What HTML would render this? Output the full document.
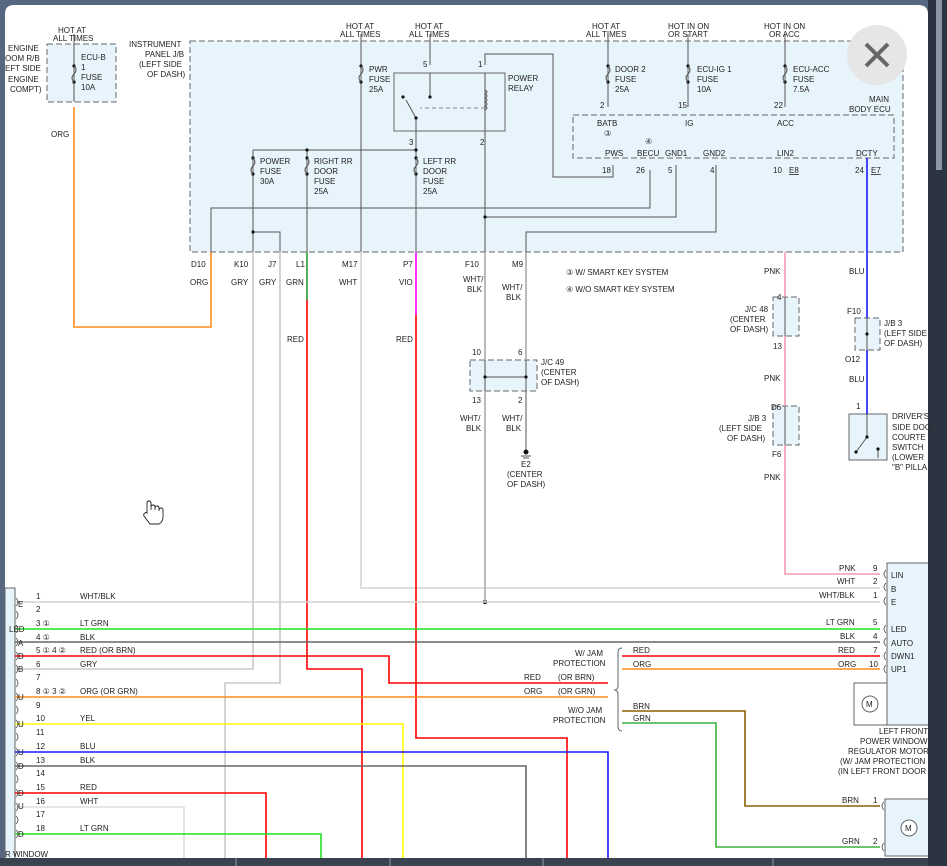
<!DOCTYPE html>
<html><head><meta charset="utf-8"><style>
html,body{margin:0;padding:0;background:#3c4a5c;}
svg{display:block}
text{font-family:"Liberation Sans",sans-serif;font-size:8px;fill:#222;}
</style></head><body>
<svg width="947" height="866" viewBox="0 0 947 866" xmlns="http://www.w3.org/2000/svg">
<rect x="0" y="0" width="947" height="866" fill="#56677f"/>
<path d="M5 866 V14 Q5 5 14 5 H918 Q928 5 928 14 V858 H5Z" fill="#fff"/>

<!-- boxes -->
<g stroke="#666" stroke-width="1" stroke-dasharray="6,3" fill="#e8f4fc">
<rect x="190" y="41" width="713" height="211"/>
<rect x="47" y="44" width="69" height="58"/>
<rect x="470" y="360" width="67" height="31"/>
<rect x="773" y="297" width="26" height="39"/>
<rect x="773" y="406" width="26" height="39"/>
<rect x="855" y="318" width="25" height="32"/>
</g>
<rect x="573" y="115" width="321" height="43" fill="none" stroke="#666" stroke-dasharray="6,3"/>
<rect x="394" y="73" width="111" height="58" fill="#e8f4fc" stroke="#666"/>
<line x1="485" y1="108" x2="420" y2="108" stroke="#888" stroke-dasharray="4,3"/>
<rect x="849" y="414" width="38" height="46" fill="#e8f4fc" stroke="#666"/>
<rect x="5" y="588" width="10" height="272" fill="#e8f4fc" stroke="#666"/>
<rect x="887" y="563" width="45" height="162" fill="#e8f4fc" stroke="#666"/>
<rect x="854" y="683" width="33" height="42" fill="#fff" stroke="#666"/>
<rect x="885" y="799" width="47" height="57" fill="#e8f4fc" stroke="#666"/>

<!-- internal gray wires -->
<g stroke="#555" stroke-width="1" fill="none">
<path d="M74 34 V102"/>
<path d="M361 34 V252"/><path d="M430 34 V65"/><path d="M430 73 V97"/>
<path d="M406 100 L416 118 V252"/>
<path d="M253 150 H416"/><path d="M253 150 V252"/><path d="M307 150 V252"/>
<path d="M253 232 H280 V252"/>
<path d="M211 252 V208 H650 V170"/>
<path d="M485 65 V54 H553 V177 H613 V165"/>
<path d="M485 73 V252"/>
<path d="M485 217 H676 V165"/>
<path d="M526 252 V232 H716 V165"/>
<path d="M608 34 V107"/><path d="M688 34 V107"/><path d="M785 34 V107"/>
<path d="M485 360 V391 M526 360 V391 M485 377 H526"/>
<path d="M785 297 V445"/><path d="M867 318 V350"/>
<path d="M526 391 V450"/>
<path d="M521 456 H531 M523 458 H529"/>
<path d="M867 414 V437 L856 452 M878 449 V458"/>
</g>
<g fill="#111">
<circle cx="74" cy="66" r="1.6"/><circle cx="74" cy="82" r="1.6"/>
<circle cx="361" cy="66" r="1.6"/><circle cx="361" cy="82" r="1.6"/>
<circle cx="608" cy="66" r="1.6"/><circle cx="608" cy="82" r="1.6"/>
<circle cx="688" cy="66" r="1.6"/><circle cx="688" cy="82" r="1.6"/>
<circle cx="785" cy="66" r="1.6"/><circle cx="785" cy="82" r="1.6"/>
<circle cx="253" cy="158" r="1.6"/><circle cx="253" cy="174" r="1.6"/>
<circle cx="307" cy="158" r="1.6"/><circle cx="307" cy="174" r="1.6"/>
<circle cx="416" cy="158" r="1.6"/><circle cx="416" cy="174" r="1.6"/>
<circle cx="307" cy="150" r="1.6"/><circle cx="416" cy="150" r="1.6"/>
<circle cx="253" cy="232" r="1.6"/><circle cx="485" cy="217" r="1.6"/>
<circle cx="430" cy="97" r="1.6"/><circle cx="403" cy="97" r="1.6"/><circle cx="416" cy="118" r="1.6"/>
<circle cx="485" cy="377" r="1.6"/><circle cx="526" cy="377" r="1.6"/>
<circle cx="867" cy="334" r="1.6"/><circle cx="867" cy="437" r="1.6"/><circle cx="856" cy="452" r="1.6"/><circle cx="878" cy="449" r="1.6"/>
<circle cx="526" cy="452" r="2.5"/><circle cx="485" cy="602" r="2.2"/>
</g>
<g stroke="#555" fill="none" stroke-width="1">
<path d="M74 66 q4 4 0 8 q-4 4 0 8 M361 66 q4 4 0 8 q-4 4 0 8 M608 66 q4 4 0 8 q-4 4 0 8 M688 66 q4 4 0 8 q-4 4 0 8 M785 66 q4 4 0 8 q-4 4 0 8 M253 158 q4 4 0 8 q-4 4 0 8 M307 158 q4 4 0 8 q-4 4 0 8 M416 158 q4 4 0 8 q-4 4 0 8"/>
<path d="M485 90 q4 2 0 4 q4 2 0 4 q4 2 0 4 q4 2 0 4 q4 2 0 4"/>
</g>

<!-- colored wires -->
<g fill="none" stroke-width="1.6">
<path d="M74 107 V327 H211 V252" stroke="#ff8c1a"/>
<path d="M253 252 V669 H15" stroke="#c8c8c8"/>
<path d="M280 252 V683 H225 V860" stroke="#c8c8c8"/>
<path d="M307 252 V300" stroke="#2a9a2a"/>
<path d="M307 300 V669 H362 V860" stroke="#f00"/>
<path d="M361 252 V588 H880" stroke="#d4d4d4"/>
<path d="M416 252 V315" stroke="#f0f"/>
<path d="M416 315 V738 H567 V860" stroke="#f00"/>
<path d="M485 252 V360 M485 391 V602 M526 252 V360" stroke="#aaa"/>
<path d="M785 252 V297 M785 336 V406 M785 445 V574 H880" stroke="#f49ab0"/>
<path d="M867 158 V318 M867 350 V414" stroke="#1a1aff"/>
<path d="M15 602 H880" stroke="#d0d0d0"/>
<path d="M15 629 H880" stroke="#22e022"/>
<path d="M15 642 H880" stroke="#666"/>
<path d="M15 656 H389 V683 H608" stroke="#f00"/>
<path d="M15 697 H608" stroke="#ff8c1a"/>
<path d="M622 656 H880" stroke="#f00"/>
<path d="M622 669 H880" stroke="#ff8c1a"/>
<path d="M622 711 H745 V806 H880" stroke="#8b6000"/>
<path d="M622 723 H716 V847 H880" stroke="#3ab03a"/>
<path d="M15 724 H403 V860" stroke="#ffff00"/>
<path d="M15 752 H608 V860" stroke="#1a1aff"/>
<path d="M15 766 H526 V860" stroke="#666"/>
<path d="M15 793 H266 V860" stroke="#f00"/>
<path d="M15 807 H184 V860" stroke="#ddd"/>
<path d="M15 834 H321 V860" stroke="#22e022"/>
</g>
<!-- connector marks -->
<g fill="none" stroke="#555" stroke-width="0.8">
<path d="M16 598 q4 4 0 8 M16 611 q4 4 0 8 M16 625 q4 4 0 8 M16 638 q4 4 0 8 M16 652 q4 4 0 8 M16 665 q4 4 0 8 M16 679 q4 4 0 8 M16 693 q4 4 0 8 M16 706 q4 4 0 8 M16 720 q4 4 0 8 M16 733 q4 4 0 8 M16 748 q4 4 0 8 M16 762 q4 4 0 8 M16 775 q4 4 0 8 M16 789 q4 4 0 8 M16 803 q4 4 0 8 M16 816 q4 4 0 8 M16 830 q4 4 0 8"/>
<path d="M886 570 q-4 4 0 8 M886 583 q-4 4 0 8 M886 597 q-4 4 0 8 M886 625 q-4 4 0 8 M886 638 q-4 4 0 8 M886 652 q-4 4 0 8 M886 665 q-4 4 0 8 M884 802 q-4 4 0 8 M884 843 q-4 4 0 8"/>
</g>
<path d="M622 648 q-4 0 -4 5 V686 q0 3 -3 4 q3 1 3 4 V726 q0 5 4 5" fill="none" stroke="#666"/>
<circle cx="870" cy="704" r="8" fill="#fff" stroke="#666"/><text x="866" y="707">M</text>
<circle cx="909" cy="828" r="8" fill="#fff" stroke="#666"/><text x="905" y="831">M</text>

<!-- right dark strip on top -->
<rect x="928" y="0" width="19" height="866" fill="#2b3440"/>
<rect x="936" y="0" width="6" height="170" fill="#8a96a6"/>
<rect x="0" y="858" width="928" height="8" fill="#38434f"/>
<g stroke="#8d99a8" stroke-width="1"><line x1="236" y1="858" x2="236" y2="866"/><line x1="390" y1="858" x2="390" y2="866"/><line x1="543" y1="858" x2="543" y2="866"/><line x1="773" y1="858" x2="773" y2="866"/></g>

<!-- close button -->
<circle cx="877" cy="55" r="30" fill="#e6e6e6"/>
<path d="M866 44 L888 66 M888 44 L866 66" stroke="#666" stroke-width="4"/>

<!-- hand cursor -->
<path d="M147 513 V503 q0 -2 2 -2 q2 0 2 2 V510 V507 q0 -2 2 -2 q2 0 2 2 V510 V508 q0 -2 2 -2 q2 0 2 2 V511 V510 q0 -2 2 -2 q2 0 2 2 V517 q0 5 -4 7 H150 L144 516 q-1 -2 1 -3 q1 -1 2 0Z" fill="#fff" stroke="#222" stroke-width="0.9"/>

<!-- text -->
<g>
<text x="58" y="33">HOT AT</text><text x="53" y="41">ALL TIMES</text>
<text x="8" y="51">ENGINE</text><text x="5" y="61">OOM R/B</text><text x="5" y="71">EFT SIDE</text><text x="8" y="82">ENGINE</text><text x="10" y="92">COMPT)</text>
<text x="81" y="60">ECU-B</text><text x="81" y="70">1</text><text x="81" y="80">FUSE</text><text x="81" y="90">10A</text>
<text x="51" y="137">ORG</text>
<text x="129" y="47">INSTRUMENT</text><text x="145" y="57">PANEL J/B</text><text x="139" y="67">(LEFT SIDE</text><text x="147" y="77">OF DASH)</text>
<text x="346" y="29">HOT AT</text><text x="340" y="37">ALL TIMES</text>
<text x="415" y="29">HOT AT</text><text x="409" y="37">ALL TIMES</text>
<text x="592" y="29">HOT AT</text><text x="586" y="37">ALL TIMES</text>
<text x="668" y="29">HOT IN ON</text><text x="668" y="37">OR START</text>
<text x="764" y="29">HOT IN ON</text><text x="769" y="37">OR ACC</text>
<text x="369" y="72">PWR</text><text x="369" y="82">FUSE</text><text x="369" y="92">25A</text>
<text x="423" y="67">5</text><text x="478" y="67">1</text>
<text x="508" y="81">POWER</text><text x="508" y="91">RELAY</text>
<text x="409" y="145">3</text><text x="480" y="145">2</text>
<text x="615" y="72">DOOR 2</text><text x="615" y="82">FUSE</text><text x="615" y="92">25A</text>
<text x="697" y="72">ECU-IG 1</text><text x="697" y="82">FUSE</text><text x="697" y="92">10A</text>
<text x="793" y="72">ECU-ACC</text><text x="793" y="82">FUSE</text><text x="793" y="92">7.5A</text>
<text x="600" y="108">2</text><text x="678" y="108">15</text><text x="774" y="108">22</text>
<text x="869" y="102">MAIN</text><text x="849" y="112">BODY ECU</text>
<text x="597" y="126">BATB</text><text x="685" y="126">IG</text><text x="777" y="126">ACC</text>
<text x="604" y="136">③</text><text x="645" y="144">④</text>
<text x="605" y="156">PWS</text><text x="637" y="156">BECU</text><text x="665" y="156">GND1</text><text x="703" y="156">GND2</text><text x="777" y="156">LIN2</text><text x="856" y="156">DCTY</text>
<text x="602" y="173">18</text><text x="636" y="173">26</text><text x="668" y="173">5</text><text x="710" y="173">4</text><text x="773" y="173">10</text><text x="789" y="173" text-decoration="underline">E8</text><text x="855" y="173">24</text><text x="871" y="173" text-decoration="underline">E7</text>
<text x="260" y="164">POWER</text><text x="260" y="174">FUSE</text><text x="260" y="184">30A</text>
<text x="314" y="164">RIGHT RR</text><text x="314" y="174">DOOR</text><text x="314" y="184">FUSE</text><text x="314" y="194">25A</text>
<text x="423" y="164">LEFT RR</text><text x="423" y="174">DOOR</text><text x="423" y="184">FUSE</text><text x="423" y="194">25A</text>
<text x="191" y="267">D10</text><text x="234" y="267">K10</text><text x="268" y="267">J7</text><text x="296" y="267">L1</text><text x="342" y="267">M17</text><text x="403" y="267">P7</text><text x="465" y="267">F10</text><text x="512" y="267">M9</text>
<text x="190" y="285">ORG</text><text x="231" y="285">GRY</text><text x="259" y="285">GRY</text><text x="286" y="285">GRN</text><text x="339" y="285">WHT</text><text x="399" y="285">VIO</text>
<text x="463" y="282">WHT/</text><text x="467" y="292">BLK</text><text x="502" y="290">WHT/</text><text x="506" y="300">BLK</text>
<text x="566" y="275">③  W/ SMART KEY SYSTEM</text><text x="566" y="292">④  W/O SMART KEY SYSTEM</text>
<text x="764" y="274">PNK</text><text x="849" y="274">BLU</text>
<text x="287" y="342">RED</text><text x="396" y="342">RED</text>
<text x="777" y="300">4</text><text x="745" y="312">J/C 48</text><text x="730" y="322">(CENTER</text><text x="730" y="332">OF DASH)</text><text x="773" y="349">13</text>
<text x="847" y="314">F10</text><text x="884" y="326">J/B 3</text><text x="884" y="336">(LEFT SIDE</text><text x="884" y="346">OF DASH)</text><text x="845" y="362">O12</text>
<text x="764" y="381">PNK</text><text x="849" y="382">BLU</text>
<text x="771" y="410">D6</text><text x="748" y="421">J/B 3</text><text x="719" y="431">(LEFT SIDE</text><text x="727" y="441">OF DASH)</text><text x="772" y="457">F6</text>
<text x="856" y="409">1</text><text x="892" y="419">DRIVER'S</text><text x="892" y="430">SIDE DOO</text><text x="892" y="440">COURTE</text><text x="892" y="450">SWITCH</text><text x="892" y="460">(LOWER</text><text x="892" y="470">"B" PILLA</text>
<text x="764" y="480">PNK</text>
<text x="472" y="355">10</text><text x="518" y="355">6</text><text x="541" y="365">J/C 49</text><text x="541" y="375">(CENTER</text><text x="541" y="385">OF DASH)</text><text x="472" y="403">13</text><text x="518" y="403">2</text>
<text x="460" y="421">WHT/</text><text x="466" y="431">BLK</text><text x="502" y="421">WHT/</text><text x="506" y="431">BLK</text>
<text x="521" y="467">E2</text><text x="507" y="477">(CENTER</text><text x="507" y="487">OF DASH)</text>
<text x="839" y="571">PNK</text><text x="873" y="571">9</text><text x="837" y="584">WHT</text><text x="873" y="584">2</text><text x="819" y="598">WHT/BLK</text><text x="873" y="598">1</text>
<text x="826" y="625">LT GRN</text><text x="873" y="625">5</text><text x="840" y="639">BLK</text><text x="873" y="639">4</text><text x="838" y="653">RED</text><text x="873" y="653">7</text><text x="838" y="667">ORG</text><text x="869" y="667">10</text>
<text x="891" y="578">LIN</text><text x="891" y="592">B</text><text x="891" y="605">E</text><text x="891" y="632">LED</text><text x="891" y="646">AUTO</text><text x="891" y="659">DWN1</text><text x="891" y="672">UP1</text>
<text x="879" y="734">LEFT FRONT</text><text x="860" y="744">POWER WINDOW</text><text x="848" y="754">REGULATOR MOTOR</text><text x="840" y="764">(W/ JAM PROTECTION</text><text x="838" y="774">(IN LEFT FRONT DOOR</text>
<text x="842" y="803">BRN</text><text x="873" y="803">1</text><text x="842" y="844">GRN</text><text x="873" y="844">2</text>
<text x="575" y="656">W/ JAM</text><text x="553" y="666">PROTECTION</text><text x="568" y="713">W/O JAM</text><text x="553" y="723">PROTECTION</text>
<text x="633" y="653">RED</text><text x="633" y="667">ORG</text><text x="633" y="709">BRN</text><text x="633" y="721">GRN</text>
<text x="524" y="680">RED</text><text x="558" y="680">(OR BRN)</text><text x="524" y="694">ORG</text><text x="558" y="694">(OR GRN)</text>
<text x="36" y="599">1</text><text x="36" y="612">2</text><text x="36" y="626">3 ①</text><text x="36" y="640">4 ①</text><text x="36" y="653">5 ① 4 ②</text><text x="36" y="667">6</text><text x="36" y="680">7</text><text x="36" y="694">8 ① 3 ②</text><text x="36" y="708">9</text><text x="36" y="721">10</text><text x="36" y="735">11</text><text x="36" y="749">12</text><text x="36" y="763">13</text><text x="36" y="776">14</text><text x="36" y="790">15</text><text x="36" y="804">16</text><text x="36" y="817">17</text><text x="36" y="831">18</text>
<text x="80" y="599">WHT/BLK</text><text x="80" y="626">LT GRN</text><text x="80" y="640">BLK</text><text x="80" y="653">RED   (OR BRN)</text><text x="80" y="667">GRY</text><text x="80" y="694">ORG   (OR GRN)</text><text x="80" y="721">YEL</text><text x="80" y="749">BLU</text><text x="80" y="763">BLK</text><text x="80" y="790">RED</text><text x="80" y="804">WHT</text><text x="80" y="831">LT GRN</text>
<text x="18" y="607">E</text><text x="9" y="632">LED</text><text x="18" y="646">A</text><text x="18" y="659">D</text><text x="18" y="672">B</text><text x="18" y="700">U</text><text x="18" y="727">U</text><text x="18" y="755">U</text><text x="18" y="769">D</text><text x="18" y="796">D</text><text x="18" y="809">U</text><text x="18" y="837">D</text>
<text x="5" y="857">R WINDOW</text>
</g>
</svg>
</body></html>
